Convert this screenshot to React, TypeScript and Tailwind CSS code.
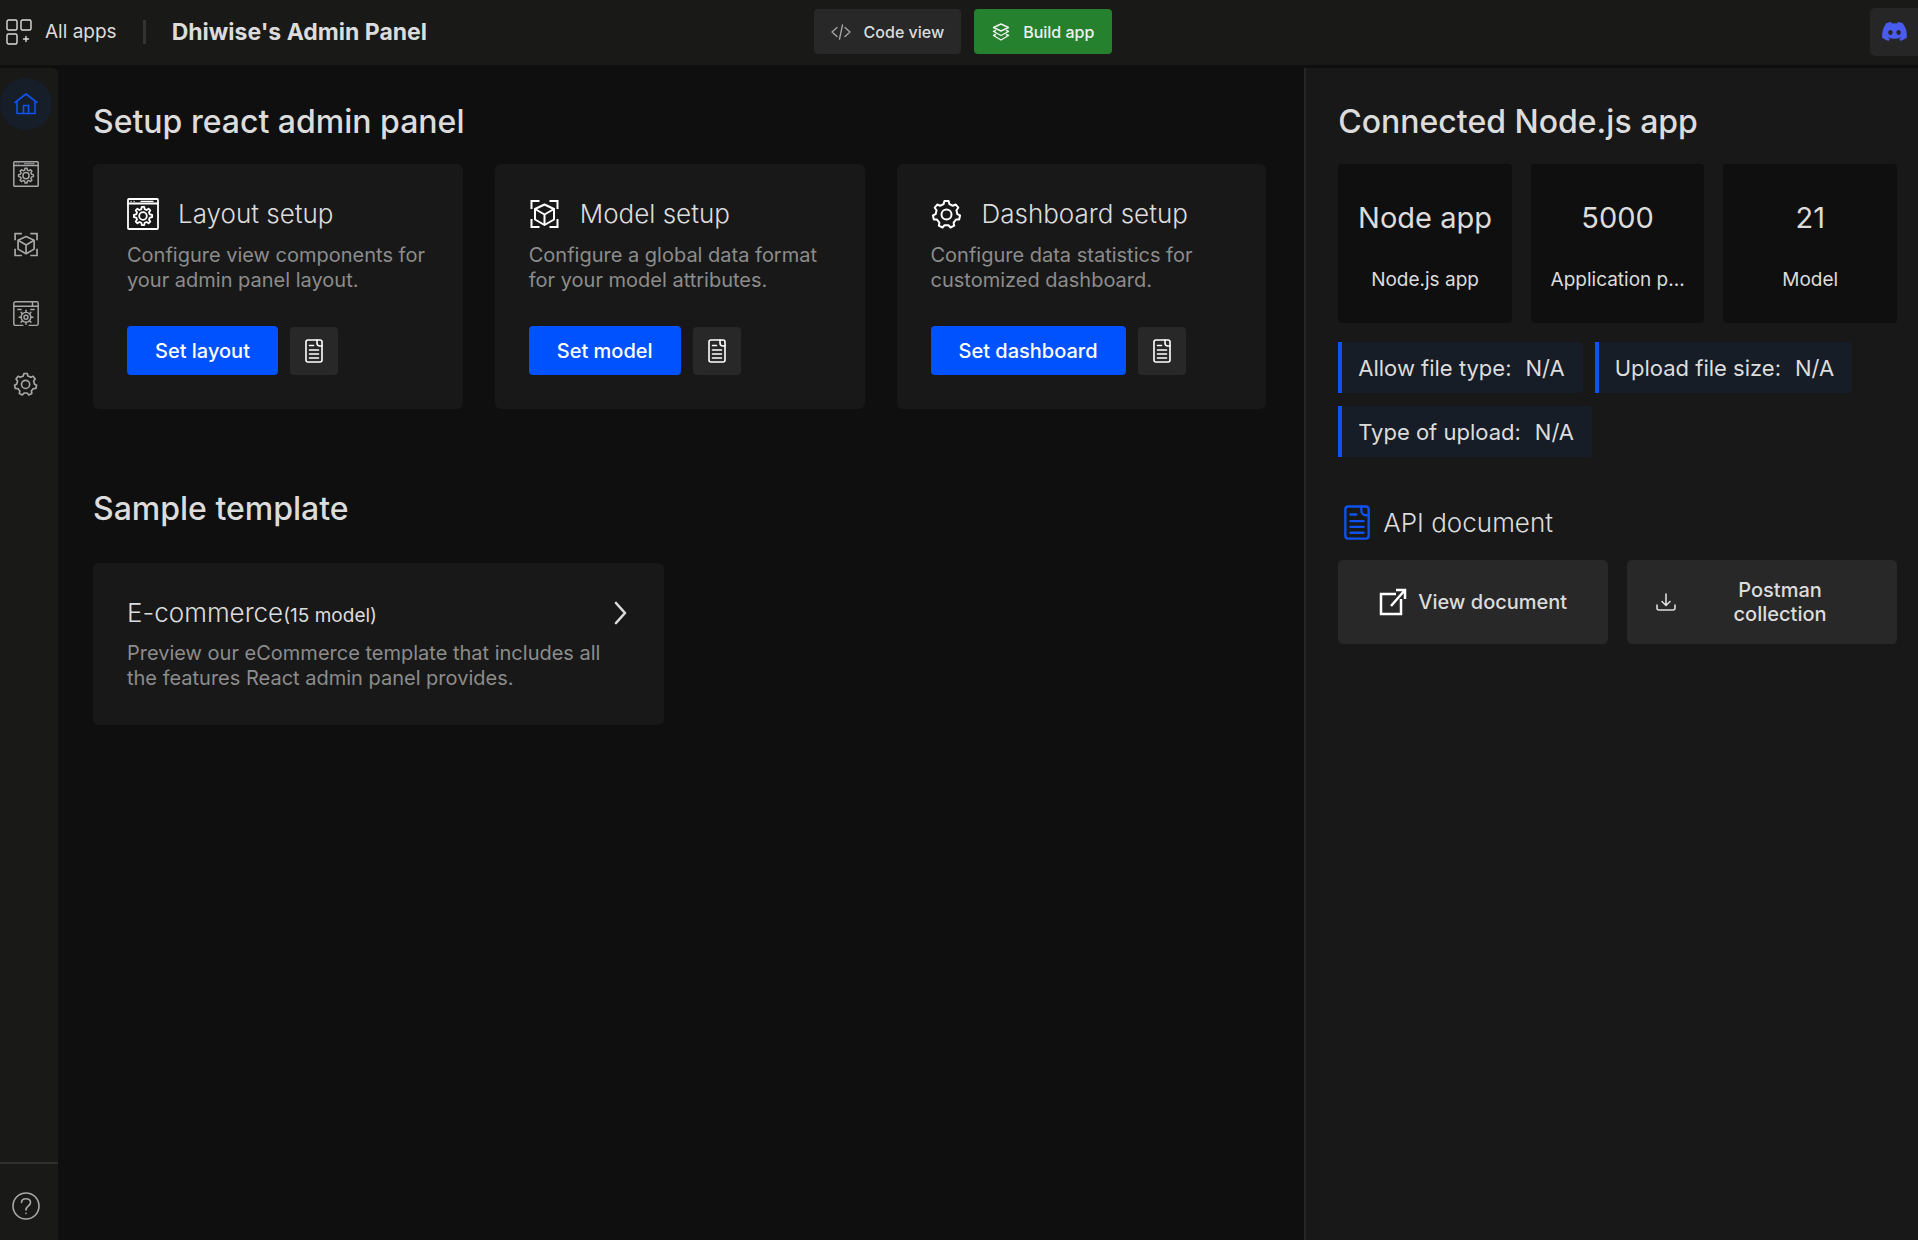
import type { ReactNode } from "react";
import { FaDiscord } from "react-icons/fa";

function gearPath(cx: number, cy: number, teeth: number, outer: number, inner: number) {
  const step = (Math.PI * 2) / teeth;
  const point = (r: number, a: number) =>
    `${(cx + r * Math.cos(a)).toFixed(2)} ${(cy + r * Math.sin(a)).toFixed(2)}`;
  const parts: string[] = [];
  for (let i = 0; i < teeth; i++) {
    const a = -Math.PI / 2 + i * step;
    parts.push(
      point(inner, a - step * 0.3),
      point(outer, a - step * 0.17),
      point(outer, a + step * 0.17),
      point(inner, a + step * 0.3),
    );
  }
  return `M${parts.join("L")}Z`;
}

type IconProps = { className?: string };

function Stroke({ className, box = "0 0 32 32", width = 2, children }: IconProps & { box?: string; width?: number; children: ReactNode }) {
  return (
    <svg
      className={className}
      viewBox={box}
      fill="none"
      stroke="currentColor"
      strokeWidth={width}
      strokeLinecap="round"
      strokeLinejoin="round"
      aria-hidden="true"
    >
      {children}
    </svg>
  );
}

function AppsIcon({ className }: IconProps) {
  return (
    <Stroke className={className} box="0 0 26 26" width={1.4}>
      <rect x="1" y="1" width="10" height="10" rx="1.5" />
      <rect x="15" y="1" width="10" height="10" rx="1.5" />
      <rect x="1" y="15" width="10" height="10" rx="1.5" />
      <path d="M20 17.500v5M17.500 20h5" />
    </Stroke>
  );
}

function CodeIcon({ className }: IconProps) {
  return (
    <Stroke className={className} box="0 0 20 16" width={1.3}>
      <path d="M6 3.500 1 8l5 4.500M14 3.500l5 4.500-5 4.500M11.500 1l-3 14" />
    </Stroke>
  );
}

function LayersIcon({ className }: IconProps) {
  return (
    <Stroke className={className} box="0 0 18 18" width={1.4}>
      <path d="M9 1 1.500 4.500 9 8l7.500-3.500Z" />
      <path d="M3.500 7.500l-2 1L9 12.500l7.500-4-2-1" />
      <path d="M3.500 11.500l-2 1L9 17l7.500-4.500-2-1" />
    </Stroke>
  );
}

function HomeIcon({ className }: IconProps) {
  return (
    <Stroke className={className} box="0 0 24 22" width={1.6}>
      <path d="M1 9.500 12 1l11 8.500" />
      <path d="M3 8.500V20.500h18V8.500" />
      <path d="M9.500 20.500V12.500h5v8" />
    </Stroke>
  );
}

function WindowGearIcon({ className }: IconProps) {
  return (
    <Stroke className={className} width={1.8}>
      <rect x="1" y="1" width="30" height="30" rx="1" />
      <path d="M1 5.500h30" />
      <path d="M4 3.300h.1M7 3.300h.1M14 3.300h12" strokeWidth="1.300" />
      <path d={gearPath(16, 18, 8, 9.2, 7)} />
      <circle cx="16" cy="18" r="3.800" />
    </Stroke>
  );
}

function ModelIcon({ className }: IconProps) {
  return (
    <svg className={className} viewBox="0 0 32 32" fill="none" stroke="currentColor" strokeWidth="2" aria-hidden="true">
      <path d="M2.500 11V3h8M20.500 3h8v8M28.500 21v8h-8M10.500 29h-8v-8" />
      <path d="M15.500 6.500 25 11v10.500L15.500 27 6 21.500V11Z" strokeLinejoin="round" />
      <path d="M6 11l9.500 5.500L25 11M15.500 16.500V27" strokeLinejoin="round" />
    </svg>
  );
}

function BrowserGearIcon({ className }: IconProps) {
  const spokes = Array.from({ length: 8 }, (_, i) => i * 45);
  return (
    <Stroke className={className} width={1.8}>
      <path d="M12 30H3a2 2 0 0 1-2-2V3a2 2 0 0 1 2-2h26a2 2 0 0 1 2 2v25a2 2 0 0 1-2 2h-9" />
      <path d="M1 6.500h30M24 1v5.500M6 10.500h4M22 10.500h4" />
      <circle cx="16" cy="20" r="6" />
      <circle cx="16" cy="20" r="2.500" />
      {spokes.map((angle) => (
        <path key={angle} d="M16 14v-2.500" transform={`rotate(${angle} 16 20)`} />
      ))}
    </Stroke>
  );
}

function GearIcon({ className }: IconProps) {
  return (
    <Stroke className={className} width={2}>
      <path d={gearPath(15.5, 16.5, 7, 13.6, 10.8)} />
      <circle cx="15.500" cy="16.500" r="5" />
    </Stroke>
  );
}

function HelpIcon({ className }: IconProps) {
  return (
    <Stroke className={className} box="0 0 28 28" width={1.6}>
      <circle cx="14" cy="14" r="13" />
      <path d="M9.500 10.500c0-5 9-5 9 0 0 3.500-4.500 3.500-4.500 7.500" />
      <path d="M14 21.200v.2" />
    </Stroke>
  );
}

function DocIcon({ className }: IconProps) {
  return (
    <Stroke className={className} box="0 0 18 24" width={1.6}>
      <path d="M12 1H3a2 2 0 0 0-2 2v18a2 2 0 0 0 2 2h12a2 2 0 0 0 2-2V6.500" />
      <path d="M12 1v3a3 3 0 0 0 3 3h2V3a2 2 0 0 0-2-2Z" />
      <path d="M4.500 6.500h4M4.500 11h9M4.500 15h9M4.500 19h9" />
    </Stroke>
  );
}

function OpenIcon({ className }: IconProps) {
  return (
    <svg className={className} viewBox="0 0 28 28" fill="none" stroke="currentColor" strokeWidth="2.500" aria-hidden="true">
      <path d="M17 6H2v20h20V11" />
      <path d="M17 2h9v9M26 2 12 18" />
    </svg>
  );
}

function DownloadIcon({ className }: IconProps) {
  return (
    <Stroke className={className} box="0 0 20 18" width={1.6}>
      <path d="M10 1v11M6 8.500l4 4 4-4M1 12v3a2 2 0 0 0 2 2h14a2 2 0 0 0 2-2v-3" />
    </Stroke>
  );
}

function ChevronIcon({ className }: IconProps) {
  return (
    <Stroke className={className} box="0 0 16 24" width={2.6}>
      <path d="M2 2l9 10-9 10" />
    </Stroke>
  );
}

function Header() {
  return (
    <header className="grid h-[65px] grid-cols-[1fr_auto_1fr] items-center bg-[#191918] pb-[2px]">
      <div className="flex items-center pl-[6px]">
        <a href="#apps" className="flex items-center gap-[13px] text-[19px] leading-6">
          <AppsIcon className="size-[26px]" />
          All apps
        </a>
        <span className="ml-[26px] h-6 w-[3px] bg-[#333333]" />
        <h1 className="ml-[26px] text-[23px] leading-7 font-bold">Dhiwise's Admin Panel</h1>
      </div>
      <div className="flex gap-[13px] pl-[8px]">
        <button type="button" className="flex h-[45px] items-center gap-[13px] rounded-[4px] bg-[#282828] px-[17px] text-[16px] font-medium">
          <CodeIcon className="h-4 w-5 text-[#a8a8a8]" />
          Code view
        </button>
        <button type="button" className="flex h-[45px] items-center gap-[13px] rounded-[4px] bg-[#25812d] px-[18px] text-[16px] font-medium text-[#f0f0f0]">
          <LayersIcon className="size-[18px]" />
          Build app
        </button>
      </div>
      <div className="flex justify-end">
        <button type="button" aria-label="Discord" className="flex size-[48px] items-center justify-center rounded-l-[5px] bg-[#262626] text-[#4a5bf0]">
          <FaDiscord className="size-[27px]" />
        </button>
      </div>
    </header>
  );
}

const navItems = [
  { label: "Home", icon: <HomeIcon className="h-[22px] w-6" />, active: true },
  { label: "Layout", icon: <WindowGearIcon className="size-[26px]" /> },
  { label: "Model", icon: <ModelIcon className="size-[27px]" /> },
  { label: "Dashboard", icon: <BrowserGearIcon className="size-[26px]" /> },
  { label: "Settings", icon: <GearIcon className="size-[26px]" /> },
];

function Sidebar() {
  return (
    <nav className="flex w-[58px] shrink-0 flex-col justify-between rounded-tr-[6px] bg-[#191918] pt-[10px] text-[#a8a8a8]">
      <ul className="flex w-[52px] flex-col gap-[18px]">
        {navItems.map((item) => (
          <li key={item.label}>
            <button
              type="button"
              aria-label={item.label}
              className={
                item.active
                  ? "flex size-[52px] items-center justify-center rounded-full bg-[#161e2a] text-[#0f52f0]"
                  : "flex size-[52px] items-center justify-center rounded-full"
              }
            >
              {item.icon}
            </button>
          </li>
        ))}
      </ul>
      <div className="border-t-2 border-[#303030] pt-[16px] pb-[8px]">
        <button type="button" aria-label="Help" className="flex size-[52px] items-center justify-center">
          <HelpIcon className="size-[28px]" />
        </button>
      </div>
    </nav>
  );
}

const setups = [
  {
    title: "Layout setup",
    text: "Configure view components for your admin panel layout.",
    action: "Set layout",
    icon: <WindowGearIcon className="size-8" />,
  },
  {
    title: "Model setup",
    text: "Configure a global data format for your model attributes.",
    action: "Set model",
    icon: <ModelIcon className="size-8" />,
  },
  {
    title: "Dashboard setup",
    text: "Configure data statistics for customized dashboard.",
    action: "Set dashboard",
    icon: <GearIcon className="size-8" />,
  },
];

function Main() {
  return (
    <main className="min-w-0 flex-1 pt-[34px] pr-[38px] pl-[35px]">
      <h2 className="text-[32px] leading-10 font-medium">Setup react admin panel</h2>
      <div className="mt-[22px] grid grid-cols-3 gap-8">
        {setups.map((s) => (
          <section key={s.title} className="rounded-[6px] bg-[#181818] p-[34px]">
            <div className="flex items-center gap-[19px]">
              <span className="text-white">{s.icon}</span>
              <h3 className="text-[26px] leading-8 font-light">{s.title}</h3>
            </div>
            <p className="mt-[13px] text-[20px] leading-[25px] text-[#8c8c8c]">{s.text}</p>
            <div className="mt-[33px] flex items-center gap-[12px]">
              <button type="button" className="h-[49px] rounded-[4px] bg-[#0052ff] px-[28px] text-[20px] font-medium text-white">
                {s.action}
              </button>
              <button type="button" aria-label={`${s.title} guide`} className="flex size-[48px] items-center justify-center rounded-[4px] bg-[#282828] text-white">
                <DocIcon className="h-6 w-[18px]" />
              </button>
            </div>
          </section>
        ))}
      </div>
      <h2 className="mt-[80px] text-[32px] leading-10 font-medium">Sample template</h2>
      <a href="#ecommerce" className="mt-[34px] block w-[571px] max-w-full rounded-[6px] bg-[#181818] px-[34px] py-[34px]">
        <div className="flex items-center justify-between">
          <h3 className="text-[26px] leading-8 font-light">
            E-commerce<span className="text-[19px] leading-none font-normal">(15 model)</span>
          </h3>
          <ChevronIcon className="h-6 w-4" />
        </div>
        <p className="mt-[12px] text-[20px] leading-[25px] text-[#8c8c8c]">
          Preview our eCommerce template that includes all the features React admin panel provides.
        </p>
      </a>
    </main>
  );
}

const stats = [
  { value: "Node app", label: "Node.js app" },
  { value: "5000", label: "Application p..." },
  { value: "21", label: "Model" },
];

const facts = [
  { name: "Allow file type:", value: "N/A" },
  { name: "Upload file size:", value: "N/A" },
  { name: "Type of upload:", value: "N/A" },
];

function NodePanel() {
  return (
    <aside className="w-[32%] shrink-0 border-l-2 border-[#262626] bg-[#181818] pt-[34px] pr-[21px] pl-[32px]">
      <h2 className="text-[32px] leading-10 font-medium">Connected Node.js app</h2>
      <div className="mt-[22px] grid grid-cols-3 gap-[19px]">
        {stats.map((s) => (
          <div key={s.label} className="min-w-0 rounded-[4px] bg-[#0f0f0f] px-[6px] pt-[34px] pb-[31px] text-center">
            <div className="text-[29px] leading-10">{s.value}</div>
            <div className="mt-[30px] text-[19px] leading-6 whitespace-nowrap">{s.label}</div>
          </div>
        ))}
      </div>
      <div className="mt-[19px] flex flex-wrap gap-x-[12px] gap-y-[13px]">
        {facts.map((f) => (
          <div key={f.name} className="flex h-[51px] items-center gap-[14px] rounded-r-[4px] border-l-4 border-[#0f52f0] bg-[#171d27] pr-[18px] pl-[16px] text-[22px] leading-7">
            <span>{f.name}</span>
            <span>{f.value}</span>
          </div>
        ))}
      </div>
      <div className="mt-[48px] flex items-center gap-[12px] pl-[5px]">
        <DocIcon className="h-[35px] w-[28px] text-[#0f52f0]" />
        <h3 className="text-[26px] leading-8 font-light">API document</h3>
      </div>
      <div className="mt-[20px] grid grid-cols-2 gap-[19px]">
        <button type="button" className="flex h-[84px] items-center justify-center gap-[11px] rounded-[5px] bg-[#282828] text-[20px] leading-6 font-medium">
          <OpenIcon className="size-[28px] text-white" />
          View document
        </button>
        <button type="button" className="flex h-[84px] items-center rounded-[5px] bg-[#282828] px-[29px] text-[20px] leading-6 font-medium">
          <DownloadIcon className="h-[18px] w-5 shrink-0" />
          <span className="flex flex-1 justify-center pl-[16px]">
            <span className="w-[120px]">Postman collection</span>
          </span>
        </button>
      </div>
    </aside>
  );
}

export default function App() {
  return (
    <div className="flex min-h-screen flex-col bg-[#0f0f0f] font-['Inter',sans-serif] text-[#dcdcdc]">
      <Header />
      <div className="mt-[3px] flex flex-1">
        <Sidebar />
        <Main />
        <NodePanel />
      </div>
    </div>
  );
}
